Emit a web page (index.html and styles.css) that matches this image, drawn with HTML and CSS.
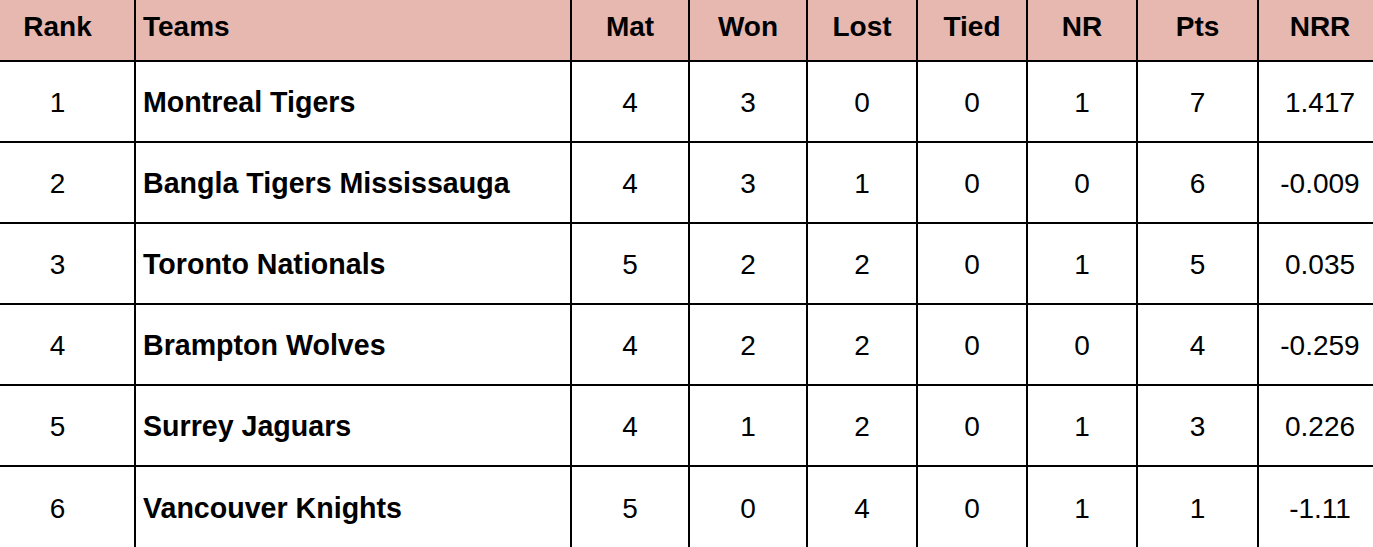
FILE: index.html
```html
<!DOCTYPE html>
<html lang="en">
<head>
<meta charset="utf-8">
<title>Points Table</title>
<link rel="stylesheet" href="styles.css">
</head>
<body>
<table class="standings">
  <colgroup>
    <col class="c-rank">
    <col class="c-team">
    <col class="c-mat">
    <col class="c-won">
    <col class="c-lost">
    <col class="c-tied">
    <col class="c-nr">
    <col class="c-pts">
    <col class="c-nrr">
  </colgroup>
  <thead>
    <tr>
      <th class="rank">Rank</th>
      <th class="team">Teams</th>
      <th>Mat</th>
      <th>Won</th>
      <th>Lost</th>
      <th>Tied</th>
      <th>NR</th>
      <th>Pts</th>
      <th class="nrr">NRR</th>
    </tr>
  </thead>
  <tbody>
    <tr>
      <td class="rank">1</td><td class="team">Montreal Tigers</td>
      <td>4</td><td>3</td><td>0</td><td>0</td><td>1</td><td>7</td><td class="nrr">1.417</td>
    </tr>
    <tr>
      <td class="rank">2</td><td class="team">Bangla Tigers Mississauga</td>
      <td>4</td><td>3</td><td>1</td><td>0</td><td>0</td><td>6</td><td class="nrr">-0.009</td>
    </tr>
    <tr>
      <td class="rank">3</td><td class="team">Toronto Nationals</td>
      <td>5</td><td>2</td><td>2</td><td>0</td><td>1</td><td>5</td><td class="nrr">0.035</td>
    </tr>
    <tr>
      <td class="rank">4</td><td class="team">Brampton Wolves</td>
      <td>4</td><td>2</td><td>2</td><td>0</td><td>0</td><td>4</td><td class="nrr">-0.259</td>
    </tr>
    <tr>
      <td class="rank">5</td><td class="team">Surrey Jaguars</td>
      <td>4</td><td>1</td><td>2</td><td>0</td><td>1</td><td>3</td><td class="nrr">0.226</td>
    </tr>
    <tr>
      <td class="rank">6</td><td class="team">Vancouver Knights</td>
      <td>5</td><td>0</td><td>4</td><td>0</td><td>1</td><td>1</td><td class="nrr">-1.11</td>
    </tr>
  </tbody>
</table>
</body>
</html>
```

FILE: styles.css
```css
html, body {
  margin: 0;
  padding: 0;
  background: #ffffff;
  overflow: hidden;
}

.standings {
  width: 1373px;
  table-layout: fixed;
  border-collapse: separate;
  border-spacing: 0;
  font-family: "Liberation Sans", Arial, sans-serif;
  font-size: 28px;
  color: #000;
}

.c-rank { width: 136px; }
.c-team { width: 436px; }
.c-mat  { width: 118px; }
.c-won  { width: 118px; }
.c-lost { width: 110px; }
.c-tied { width: 110px; }
.c-nr   { width: 110px; }
.c-pts  { width: 121px; }
.c-nrr  { width: 114px; }

.standings th,
.standings td {
  box-sizing: border-box;
  border-right: 2px solid #000;
  border-bottom: 2px solid #000;
  padding: 0;
  text-align: center;
  white-space: nowrap;
  overflow: hidden;
}

.standings th:last-child,
.standings td:last-child {
  border-right: none;
}

.standings tbody tr:last-child td {
  border-bottom: none;
}

.standings th {
  background: #e6b8af;
  font-weight: bold;
  height: 62px;
  padding: 11px 0 18px;
  line-height: 31px;
  vertical-align: middle;
}

.standings td {
  height: 81px;
  line-height: 31px;
  vertical-align: middle;
  font-weight: normal;
  padding-top: 1px;
}

.standings .rank {
  padding-right: 19px;
}

.standings th.team {
  text-align: left;
  padding-left: 7px;
}

.standings td.team {
  text-align: left;
  padding-left: 7px;
  font-weight: bold;
  font-size: 28.6px;
}

.standings .nrr {
  padding-left: 8px;
}
```
